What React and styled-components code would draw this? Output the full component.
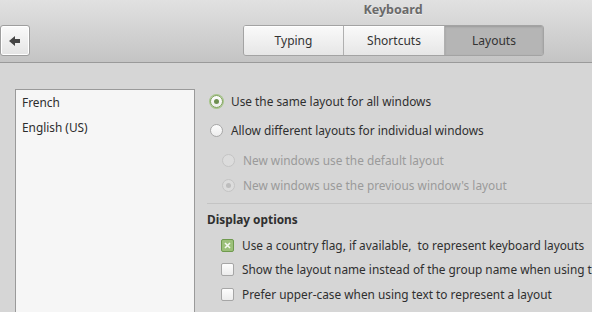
import React from "react";
import styled, { createGlobalStyle } from "styled-components";

const Global = createGlobalStyle`
  html, body { margin: 0; padding: 0; }
  body { background: #d6d6d6; font-family: "Noto Sans", "DejaVu Sans", sans-serif; }
`;

const Window = styled.div`
  width: 592px;
  height: 312px;
  overflow: hidden;
  background: #d6d6d6;
  display: flex;
  flex-direction: column;
  font-size: 11.85px;
  color: #333;
`;

const Header = styled.div`
  height: 62px;
  flex: none;
  background: linear-gradient(#e1e1e1, #c4c4c4);
  border-bottom: 1px solid #9a9a9a;
  display: grid;
  grid-template-rows: 19px 1fr;
`;

const Title = styled.div`
  text-align: center;
  padding-left: 194px;
  font-weight: bold;
  font-size: 12.5px;
  color: #6a6a6a;
  text-shadow: 0 1px 0 rgba(255,255,255,0.6);
  line-height: 19px;
`;

const Toolbar = styled.div`
  display: flex;
  align-items: flex-start;
  padding-top: 6px;
`;

const BackButton = styled.button`
  width: 30px;
  height: 31px;
  border: 1px solid #9e9e9e;
  border-radius: 3px;
  background: linear-gradient(#fafafa, #e4e4e4);
  box-shadow: inset 0 0 0 1px #fff;
  display: flex;
  align-items: center;
  justify-content: center;
  padding: 0;
`;

const Tabs = styled.div`
  display: flex;
  margin-left: 213px;
  border: 1px solid #a3a3a3;
  border-radius: 3px;
  overflow: hidden;
  height: 29px;
`;

const Tab = styled.div`
  width: ${p => p.$w}px;
  display: flex;
  align-items: center;
  justify-content: center;
  font-size: 12px;
  color: #333;
  background: ${p => p.$active ? "#b5b5b5" : "linear-gradient(#fafafa, #e6e6e6)"};
  border-left: ${p => p.$first ? "none" : "1px solid #b0b0b0"};
  box-shadow: ${p => p.$active ? "inset 0 1px 2px rgba(0,0,0,0.15)" : "inset 0 1px 0 #fff"};
`;

const Body = styled.div`
  flex: 1;
  display: flex;
  padding: 26px 0 0 15px;
  min-height: 0;
`;

const List = styled.div`
  width: 172px;
  flex: none;
  background: #f6f6f6;
  border: 1px solid #9a9a9a;
  border-bottom: none;
  padding: 0 0 0 6px;
  display: flex;
  flex-direction: column;
`;

const ListItem = styled.div`
  height: 25px;
  line-height: 25px;
  color: #2c2c2c;
`;

const Options = styled.div`
  flex: 1;
  padding-left: 15px;
  display: flex;
  flex-direction: column;
  white-space: pre;
  min-width: 0;
`;

const Row = styled.div`
  display: flex;
  align-items: center;
  height: ${p => p.$h || 24}px;
  padding-left: ${p => p.$indent || 0}px;
  gap: 8px;
  color: ${p => p.$disabled ? "#9a9a9a" : "#2f2f2f"};
`;

const Radio = styled.span`
  width: 13px;
  height: 13px;
  flex: none;
  border-radius: 50%;
  box-sizing: border-box;
  border: 1px solid ${p => p.$checked ? "#7fa35a" : p.$disabled ? "#c4c4c4" : "#a8a8a8"};
  background: ${p => p.$disabled ? "#dcdcdc" : "linear-gradient(#fdfdfd, #ececec)"};
  display: flex;
  align-items: center;
  justify-content: center;
  box-shadow: ${p => p.$checked ? "0 0 0 1px #a7c68a" : "none"};
  &::after {
    content: "";
    display: ${p => p.$dot ? "block" : "none"};
    width: 5px;
    height: 5px;
    border-radius: 50%;
    background: ${p => p.$checked ? "#6e8f52" : "#bdbdbd"};
  }
`;

const Separator = styled.div`
  height: 1px;
  background: #c4c4c4;
  margin: 6px 0 0 -3px;
`;

const SectionTitle = styled.div`
  font-weight: bold;
  color: #2f2f2f;
  height: 30px;
  line-height: 30px;
  margin-left: -3px;
`;

const Check = styled.span`
  width: 13px;
  height: 13px;
  box-sizing: border-box;
  flex: none;
  border-radius: 2px;
  border: 1px solid ${p => p.$checked ? "#6f9a4e" : "#a6a6a6"};
  background: ${p => p.$checked ? "#9cc07a" : "linear-gradient(#fdfdfd, #ececec)"};
  display: flex;
  align-items: center;
  justify-content: center;
`;

function BackArrow() {
  return (
    <svg width="12" height="10" viewBox="0 0 12 10">
      <path d="M0 5 L6 0 L6 3 L11 3 L11 7 L6 7 L6 10 Z" fill="#444" />
    </svg>
  );
}

function XMark() {
  return (
    <svg width="7" height="7" viewBox="0 0 7 7">
      <path d="M1 1 L6 6 M6 1 L1 6" stroke="#f4f8ef" strokeWidth="1.6" />
    </svg>
  );
}

export default function App() {
  return (
    <Window>
      <Global />
      <Header>
        <Title>Keyboard</Title>
        <Toolbar>
          <BackButton><BackArrow /></BackButton>
          <Tabs>
            <Tab $w={99} $first>Typing</Tab>
            <Tab $w={100}>Shortcuts</Tab>
            <Tab $w={98} $active>Layouts</Tab>
          </Tabs>
        </Toolbar>
      </Header>
      <Body>
        <List>
          <ListItem>French</ListItem>
          <ListItem>English (US)</ListItem>
        </List>
        <Options>
          <Row $h={24}><Radio $checked $dot />Use the same layout for all windows</Row>
          <Row $h={34}><Radio />Allow different layouts for individual windows</Row>
          <Row $h={26} $indent={12} $disabled><Radio $disabled />New windows use the default layout</Row>
          <Row $h={24} $indent={12} $disabled><Radio $disabled $dot />New windows use the previous window's layout</Row>
          <Separator />
          <SectionTitle>Display options</SectionTitle>
          <Row $h={22} $indent={11}><Check $checked><XMark /></Check>Use a country flag, if available,  to represent keyboard layouts</Row>
          <Row $h={26} $indent={11}><Check />Show the layout name instead of the group name when using text</Row>
          <Row $h={24} $indent={11}><Check />Prefer upper-case when using text to represent a layout</Row>
        </Options>
      </Body>
    </Window>
  );
}
